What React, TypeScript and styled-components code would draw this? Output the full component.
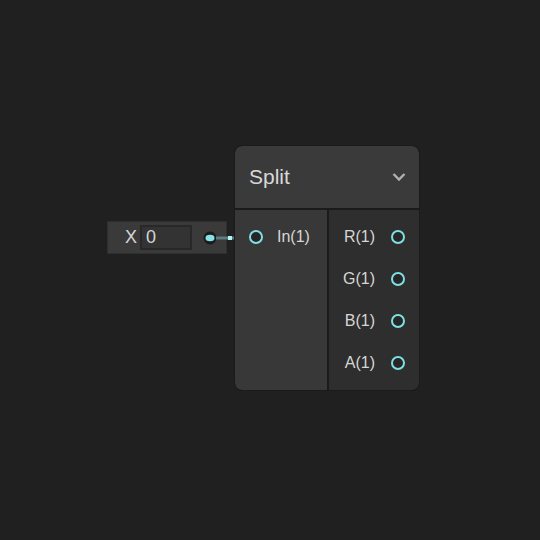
import React from 'react';
import styled, { createGlobalStyle } from 'styled-components';

const GlobalStyle = createGlobalStyle`
  html, body {
    margin: 0;
    padding: 0;
    background: #202020;
  }
  body {
    font-family: 'Liberation Sans', Arial, sans-serif;
  }
`;

interface Port {
  label: string;
}

const inputs: Port[] = [{ label: 'In(1)' }];
const outputs: Port[] = [{ label: 'R(1)' }, { label: 'G(1)' }, { label: 'B(1)' }, { label: 'A(1)' }];

export default function App() {
  return (
    <>
      <GlobalStyle />
      <Canvas>
        <ValueWidget>
          <AxisLabel>X</AxisLabel>
          <ValueField>0</ValueField>
        </ValueWidget>

        <Wire width="60" height="14" viewBox="0 0 60 14">
          <circle cx="7" cy="7" r="6.5" fill="#1b1b1b" />
          <ellipse cx="7" cy="7" rx="4.5" ry="3.2" fill="#86e2e6" />
          <rect x="13" y="5.5" width="34" height="3" fill="#5c7d7f" />
          <rect x="25" y="5" width="4" height="4" fill="#b4f3f4" />
        </Wire>

        <Node>
          <NodeHeader>
            <NodeTitle>Split</NodeTitle>
            <svg width="14" height="10" viewBox="0 0 14 10">
              <path d="M1.5 2 L7 7.5 L12.5 2" fill="none" stroke="#b0b0b0" strokeWidth="2.4" />
            </svg>
          </NodeHeader>
          <NodeBody>
            <PortColumn $side="in">
              {inputs.map((p) => (
                <PortRow key={p.label} $side="in">
                  <PortRing />
                  <PortLabel>{p.label}</PortLabel>
                </PortRow>
              ))}
            </PortColumn>
            <PortColumn $side="out">
              {outputs.map((p) => (
                <PortRow key={p.label} $side="out">
                  <PortLabel>{p.label}</PortLabel>
                  <PortRing />
                </PortRow>
              ))}
            </PortColumn>
          </NodeBody>
        </Node>
      </Canvas>
    </>
  );
}

const Canvas = styled.main`
  position: relative;
  width: 540px;
  height: 540px;
  overflow: hidden;
  background: #202020;
`;

const ValueWidget = styled.div`
  position: absolute;
  left: 107px;
  top: 221px;
  width: 120px;
  height: 33px;
  box-sizing: border-box;

  display: flex;
  align-items: center;
  gap: 3px;
  padding-left: 17px;

  background: #3a3a3a;
  border: 1px solid #2e2e2e;
`;

const AxisLabel = styled.span`
  font-size: 18px;
  color: #d6d6d6;
`;

const ValueField = styled.div`
  width: 52px;
  height: 25px;
  box-sizing: border-box;
  padding-left: 4px;

  display: flex;
  align-items: center;

  font-size: 18px;
  color: #d6d6d6;

  background: #333333;
  border: 2px solid #282828;
`;

const Wire = styled.svg`
  position: absolute;
  left: 203px;
  top: 231px;
`;

const Node = styled.section`
  position: absolute;
  left: 234px;
  top: 145px;
  width: 186px;
  box-sizing: border-box;

  display: flex;
  flex-direction: column;

  background: #1b1b1b;
  border: 1px solid #1b1b1b;
  border-radius: 8px;
  overflow: hidden;
`;

const NodeHeader = styled.header`
  height: 62px;
  display: flex;
  align-items: center;
  justify-content: space-between;
  padding: 0 13px 0 14px;
  margin-bottom: 2px;

  background: #3a3a3a;
  border-radius: 7px 7px 0 0;
`;

const NodeTitle = styled.h2`
  margin: 0;
  font-size: 21px;
  font-weight: 400;
  color: #d8d8d8;
`;

const NodeBody = styled.div`
  display: grid;
  grid-template-columns: 92px 90px;
  column-gap: 2px;
  height: 180px;
`;

const PortColumn = styled.div<{ $side: 'in' | 'out' }>`
  display: flex;
  flex-direction: column;
  padding: 6px 14px;

  background: ${({ $side }) => ($side === 'in' ? '#383838' : '#2e2e2e')};
  border-radius: ${({ $side }) => ($side === 'in' ? '0 0 0 7px' : '0 0 7px 0')};
`;

const PortRow = styled.div<{ $side: 'in' | 'out' }>`
  height: 42px;
  display: flex;
  align-items: center;
  justify-content: ${({ $side }) => ($side === 'in' ? 'flex-start' : 'flex-end')};
  gap: ${({ $side }) => ($side === 'in' ? '14px' : '16px')};
`;

const PortRing = styled.span`
  width: 14px;
  height: 14px;
  box-sizing: border-box;
  flex-shrink: 0;

  border: 2.5px solid #7fdfe3;
  border-radius: 50%;
  background: #262626;
`;

const PortLabel = styled.span`
  font-size: 16px;
  color: #d6d6d6;
`;
